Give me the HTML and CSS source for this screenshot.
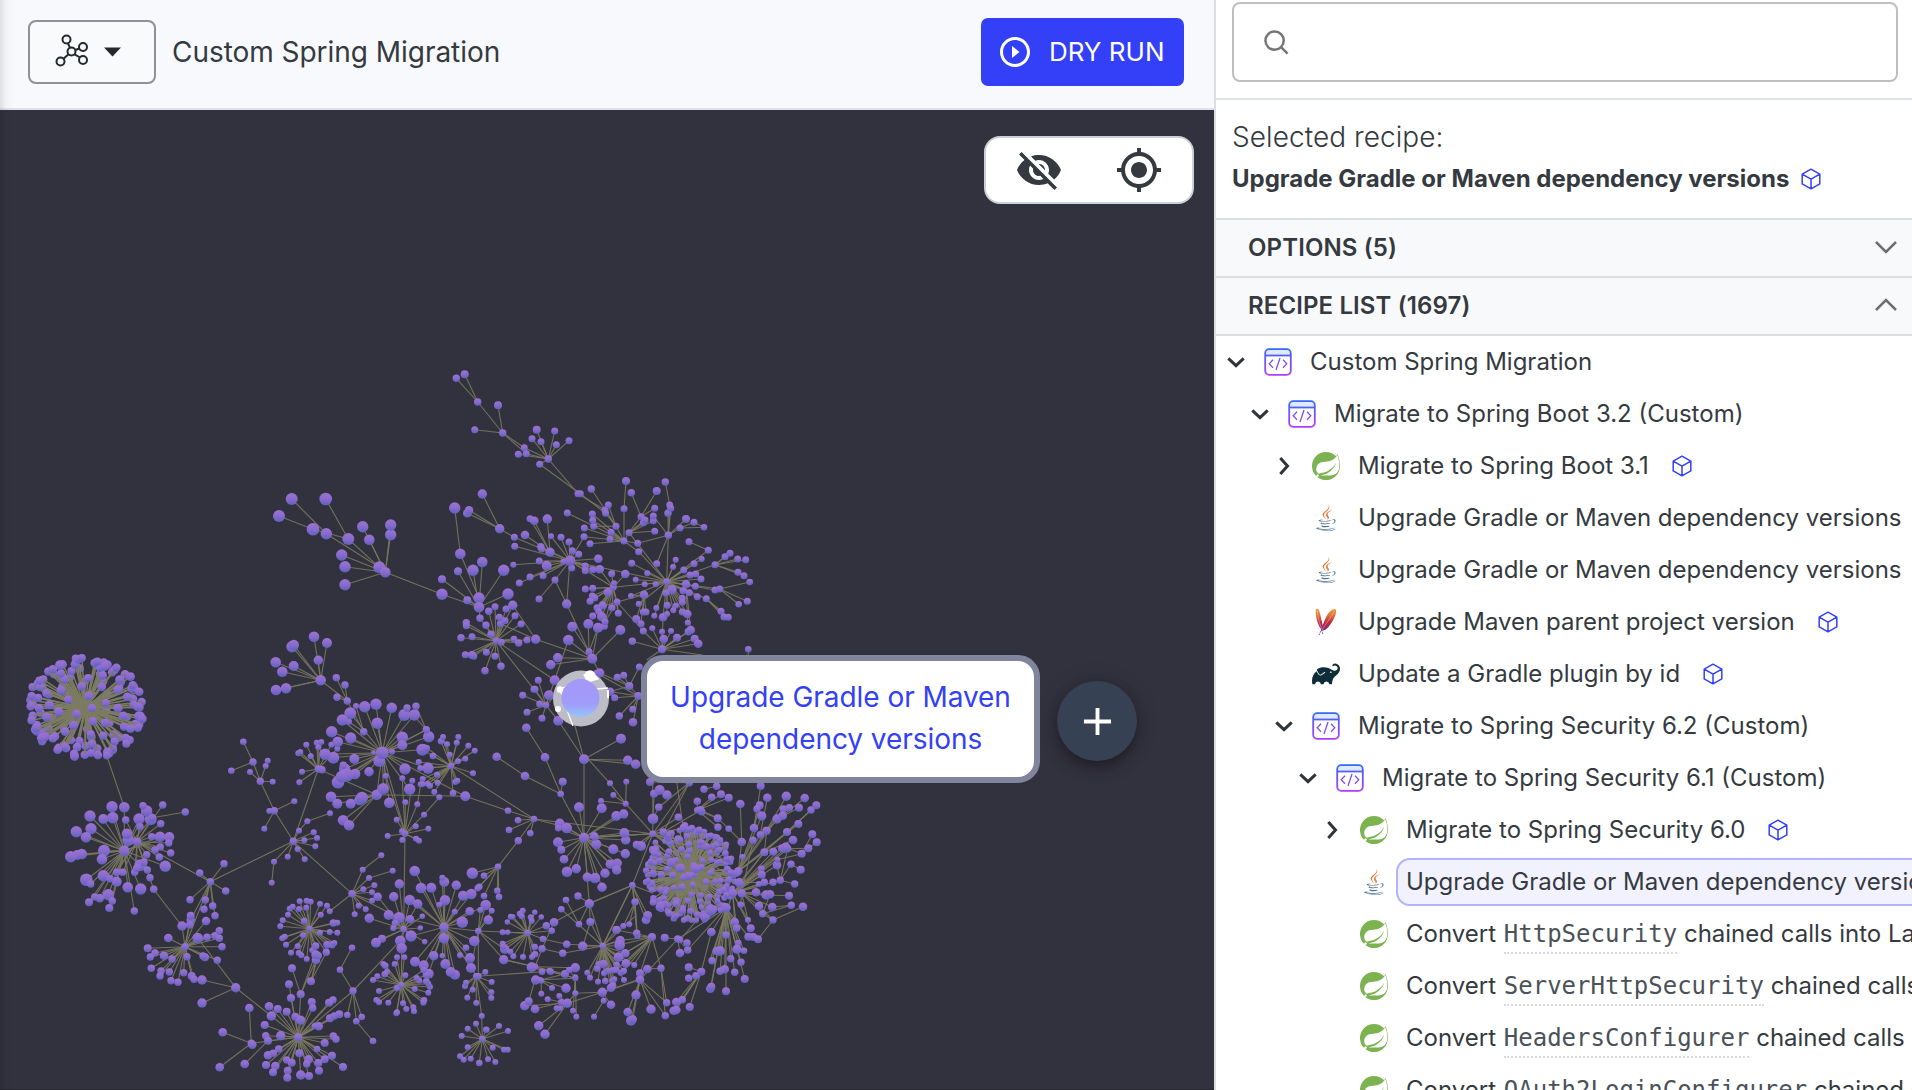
FILE: index.html
```html
<!DOCTYPE html>
<html lang="en">
<head>
<meta charset="utf-8">
<title>Custom Spring Migration</title>
<link rel="stylesheet" href="styles.css">
</head>
<body>
<svg class="defs" aria-hidden="true">
  <defs>
    <linearGradient id="code-stroke" gradientUnits="userSpaceOnUse" x1="0" y1="0" x2="0" y2="28"><stop offset="0" stop-color="#2f6bf5"/><stop offset="1" stop-color="#b63bfa"/></linearGradient>
    <linearGradient id="feather" x1="0" y1="0" x2="0" y2="1"><stop offset="0" stop-color="#f0a13a"/><stop offset=".3" stop-color="#e0713a"/><stop offset=".65" stop-color="#c1263f"/><stop offset="1" stop-color="#7a2a85"/></linearGradient>
    <linearGradient id="node-fill" x1="0" y1="0" x2="0" y2="1"><stop offset="0" stop-color="#9a74d2"/><stop offset=".5" stop-color="#8a6bcd"/><stop offset="1" stop-color="#5c62bf"/></linearGradient>
    <linearGradient id="selected-fill" x1="0" y1="0" x2="0" y2="1"><stop offset="0" stop-color="#a298f8"/><stop offset=".65" stop-color="#a29bf9"/><stop offset="1" stop-color="#93c6fb"/></linearGradient>
  </defs>
  <symbol id="i-down" viewBox="0 0 20 20"><path d="M2.300 6.300l7.700 7.400 7.700-7.400" fill="none" stroke="#2f353a" stroke-width="3"/></symbol>
  <symbol id="i-right" viewBox="0 0 20 20"><path d="M6.300 2l7.200 8-7.200 8" fill="none" stroke="#2f353a" stroke-width="3"/></symbol>
  <symbol id="i-code" viewBox="0 0 28 28"><g fill="none" stroke="url(#code-stroke)"><path d="M2 7h24V5a3.500 3.500 0 0 0-3.500-3.500h-17A3.500 3.500 0 0 0 2 5z" fill="#dfe9ff" stroke="none"/><rect x="1.200" y="1.200" width="25.600" height="25.600" rx="4" stroke-width="1.800"/><path d="M1.500 7.500h25" stroke-width="1.800"/><path d="M9 11.800l-3.800 4L9 19.800M19 11.800l3.800 4-3.800 4M16 10l-4 12" stroke-width="1.300"/></g></symbol>
  <symbol id="i-cube" viewBox="0 0 22 22"><path d="M11 1.200l8.800 4.900v9.800L11 20.800l-8.800-4.900V6.100zM2.200 6.100L11 11.200l8.800-5.100M11 11.200v9.600" fill="none" stroke="#3340f7" stroke-width="1.500" stroke-linejoin="round"/></symbol>
  <symbol id="i-spring" viewBox="0 0 24 24"><path fill="#7cb350" d="M21.854 1.416a10.450 10.450 0 0 1-1.284 2.247A11.967 11.967 0 1 0 3.852 20.776l.444.395a11.954 11.954 0 0 0 19.632-8.297c.346-3.013-.568-6.865-2.074-11.458zM5.580 20.875a1.017 1.017 0 1 1-.148-1.432 1.040 1.040 0 0 1 .148 1.432zm16.200-3.581c-2.939 3.926-9.260 2.593-13.285 2.790 0 0-.716.050-1.433.149 0 0 .272-.124.618-.247 2.840-.988 4.173-1.186 5.901-2.075 3.235-1.654 6.470-5.284 7.112-9.037-1.234 3.605-4.988 6.716-8.396 7.976-2.346.864-6.568 1.704-6.568 1.704l-.173-.099c-2.865-1.408-2.963-7.630 2.272-9.631 2.296-.889 4.469-.395 6.963-.987 2.643-.618 5.705-2.593 6.939-5.186 1.383 4.173 3.062 10.643.050 14.643z"/></symbol>
  <symbol id="i-java" viewBox="0 0 24 24"><path fill="#4c7192" d="M8.851 18.560s-.917.534.653.714c1.902.218 2.874.187 4.969-.211 0 0 .552.346 1.321.646-4.699 2.013-10.633-.118-6.943-1.149M8.276 15.933s-1.028.761.542.924c2.032.209 3.636.227 6.413-.308 0 0 .384.389.987.602-5.679 1.661-12.007.130-7.942-1.218M19.330 20.504s.679.559-.747.991c-2.712.822-11.288 1.069-13.669.033-.856-.373.750-.890 1.254-.998.527-.114.828-.093.828-.093-.953-.671-6.156 1.317-2.643 1.887 9.580 1.553 17.462-.700 14.977-1.820M9.292 13.210s-4.362 1.036-1.544 1.412c1.189.159 3.561.123 5.770-.062 1.806-.152 3.618-.477 3.618-.477s-.637.272-1.098.587c-4.429 1.165-12.986.623-10.522-.568 2.082-1.006 3.776-.892 3.776-.892M17.116 17.584c4.503-2.340 2.421-4.589.968-4.285-.355.074-.515.138-.515.138s.132-.207.385-.297c2.875-1.011 5.086 2.981-.928 4.562 0-.001.070-.062.090-.118M9.734 23.924c4.322.277 10.959-.153 11.116-2.198 0 0-.302.775-3.572 1.391-3.688.694-8.239.613-10.937.168 0-.001.553.457 3.393.639"/><path fill="#e07a35" d="M13.116 11.475c1.158 1.333-.304 2.533-.304 2.533s2.939-1.518 1.589-3.418c-1.261-1.772-2.228-2.652 3.007-5.688 0-.001-8.216 2.051-4.292 6.573M14.401 0s2.494 2.494-2.365 6.330c-3.896 3.077-.888 4.832-.001 6.836-2.274-2.053-3.943-3.858-2.824-5.539 1.644-2.469 6.197-3.665 5.190-7.627"/></symbol>
  <symbol id="i-maven" viewBox="0 0 28 28"><path fill="url(#feather)" d="M4.300.8C6.500.3 7.300 2.400 8 5.200l2.700 12 2-5C14.500 7.500 17 3.500 20.500 1.500c2-1 3.900-.6 3.700 1.700-.2 4-3.700 11-8.200 16.400-2 2.200-4.500 3.400-6 3C7.200 19 4.600 13 4 7.500c-.2-2.700-.6-5.800.3-6.700z"/><path d="M5.200 2c.5 7 2.200 13.500 4.800 19.500M22.500 3C19 9 14 16 9.500 22.500" fill="none" stroke="#fff" stroke-opacity=".5" stroke-width=".7"/><path d="M9.800 21l-3 6.500M9.500 22l1.500 4.500" fill="none" stroke="#6b3f86" stroke-width="1" stroke-dasharray="1.500 1"/></symbol>
  <symbol id="i-gradle" viewBox="0 0 24 24"><path fill="#0f2d38" d="M22.695 4.297a3.807 3.807 0 0 0-5.290-.090.368.368 0 0 0 0 .533l.460.470a.363.363 0 0 0 .474.032 2.182 2.182 0 0 1 2.860 3.291c-3.023 3.020-7.056-5.447-16.211-1.083a1.240 1.240 0 0 0-.534 1.745l1.571 2.713a1.238 1.238 0 0 0 1.681.461l.037-.020-.029.020.688-.384a16.083 16.083 0 0 0 2.193-1.635.384.384 0 0 1 .499-.016.357.357 0 0 1 .016.534 16.435 16.435 0 0 1-2.316 1.741H8.770l-.696.390a1.958 1.958 0 0 1-.963.250 1.987 1.987 0 0 1-1.726-.989L3.900 9.696C1.060 11.720-.686 15.603.260 20.522a.363.363 0 0 0 .354.296h1.675a.363.363 0 0 0 .370-.331 2.478 2.478 0 0 1 4.915 0 .360.360 0 0 0 .357.317h1.638a.363.363 0 0 0 .357-.317 2.478 2.478 0 0 1 4.914 0 .363.363 0 0 0 .358.317h1.627a.363.363 0 0 0 .363-.357c.037-2.294.656-4.930 2.420-6.250 6.108-4.570 4.502-8.486 3.088-9.900zm-6.229 6.901l-1.165-.584a.730.730 0 1 1 1.165.587z"/></symbol>
</svg>

<div class="app">
  <main class="workspace">
    <header class="topbar">
      <button class="mode" aria-label="View mode">
        <svg class="mode-icon" viewBox="0 0 34 38" fill="none" stroke="#24292e" stroke-width="2"><circle cx="17.500" cy="18.500" r="4"/><circle cx="12.500" cy="6.500" r="4"/><circle cx="29" cy="14" r="4"/><circle cx="29" cy="27" r="4"/><circle cx="6.500" cy="28.500" r="4"/><path d="M16 14.800l-2-4.500M21.300 17l4-1.500M20.600 21.300l5.400 3.200M14.500 21.300l-5 4.500"/></svg>
        <svg class="mode-caret" viewBox="0 0 17 10"><path d="M0 .5h17L8.500 9.500z" fill="#24292e"/></svg>
      </button>
      <h1 class="title">Custom Spring Migration</h1>
      <button class="run">
        <svg class="run-icon" viewBox="2 2 20 20"><path fill="#fff" d="M10 16l5-4-5-4v8zM12 2C6.480 2 2 6.480 2 12s4.480 10 10 10 10-4.480 10-10S17.520 2 12 2zm0 18c-4.410 0-8-3.590-8-8s3.590-8 8-8 8 3.590 8 8-3.590 8-8 8z"/></svg>
        <span>DRY RUN</span>
      </button>
    </header>
    <section class="canvas">
      <svg class="graph" id="graph" viewBox="0 110 1214 980"></svg>
      <div class="tools">
        <svg viewBox="0 0 24 24"><path d="M12 7c2.760 0 5 2.240 5 5 0 .650-.130 1.260-.360 1.830l2.920 2.920c1.510-1.260 2.700-2.890 3.430-4.750-1.730-4.390-6-7.500-11-7.500-1.400 0-2.740.250-3.980.700l2.160 2.160C10.740 7.130 11.350 7 12 7zM2 4.270l2.280 2.280.460.460C3.080 8.300 1.780 10.020 1 12c1.730 4.390 6 7.500 11 7.500 1.550 0 3.030-.300 4.380-.840l.420.420L19.730 22 21 20.730 3.270 3 2 4.270zM7.530 9.800l1.550 1.550c-.050.210-.080.430-.080.650 0 1.660 1.340 3 3 3 .220 0 .440-.030.650-.080l1.550 1.550c-.670.330-1.410.530-2.200.530-2.760 0-5-2.240-5-5 0-.790.200-1.530.530-2.200zm4.310-.780l3.150 3.150.020-.160c0-1.660-1.340-3-3-3l-.170.010z"/></svg>
        <svg viewBox="0 0 24 24"><path d="M12 8c-2.210 0-4 1.790-4 4s1.790 4 4 4 4-1.790 4-4-1.790-4-4-4zm8.940 3c-.460-4.170-3.770-7.480-7.940-7.940V1h-2v2.060C6.830 3.520 3.520 6.830 3.060 11H1v2h2.060c.460 4.170 3.770 7.480 7.940 7.940V23h2v-2.060c4.170-.460 7.480-3.770 7.940-7.940H23v-2h-2.060zM12 19c-3.870 0-7-3.130-7-7s3.130-7 7-7 7 3.130 7 7-3.130 7-7 7z"/></svg>
      </div>
      <div class="bubble">Upgrade Gradle or Maven<br>dependency versions</div>
      <button class="add" aria-label="Add"><svg viewBox="0 0 30 30"><path d="M15 1v28M1 15h28" stroke="#fff" stroke-width="4"/></svg></button>
    </section>
  </main>

  <aside class="panel">
    <div class="search-wrap"><div class="search"><svg viewBox="0 0 26 26" fill="none" stroke="#757575" stroke-width="2.600"><circle cx="11" cy="11" r="9.500"/><path d="M17.500 17.500l7 7"/></svg></div></div>
    <div class="selected">
      <p class="selected-label">Selected recipe:</p>
      <p class="selected-name"><span>Upgrade Gradle or Maven dependency versions</span><svg class="cube"><use href="#i-cube"/></svg></p>
    </div>
    <div class="section"><span>OPTIONS (5)</span><svg viewBox="0 0 24 14"><path d="M2 2l10 10L22 2" fill="none" stroke="#6e6e6e" stroke-width="2.500"/></svg></div>
    <div class="section"><span>RECIPE LIST (1697)</span><svg viewBox="0 0 24 14"><path d="M2 12L12 2l10 10" fill="none" stroke="#6e6e6e" stroke-width="2.500"/></svg></div>
    <ul class="tree">
      <li class="row l0"><svg class="chev"><use href="#i-down"/></svg><svg class="ico"><use href="#i-code"/></svg><span class="name">Custom Spring Migration</span></li>
      <li class="row l1"><svg class="chev"><use href="#i-down"/></svg><svg class="ico"><use href="#i-code"/></svg><span class="name">Migrate to Spring Boot 3.2 (Custom)</span></li>
      <li class="row l2"><svg class="chev"><use href="#i-right"/></svg><svg class="ico"><use href="#i-spring"/></svg><span class="name">Migrate to Spring Boot 3.1</span><svg class="cube"><use href="#i-cube"/></svg></li>
      <li class="row l2"><span class="chev"></span><svg class="ico java"><use href="#i-java"/></svg><span class="name">Upgrade Gradle or Maven dependency versions</span></li>
      <li class="row l2"><span class="chev"></span><svg class="ico java"><use href="#i-java"/></svg><span class="name">Upgrade Gradle or Maven dependency versions</span></li>
      <li class="row l2"><span class="chev"></span><svg class="ico"><use href="#i-maven"/></svg><span class="name">Upgrade Maven parent project version</span><svg class="cube"><use href="#i-cube"/></svg></li>
      <li class="row l2"><span class="chev"></span><svg class="ico"><use href="#i-gradle"/></svg><span class="name">Update a Gradle plugin by id</span><svg class="cube"><use href="#i-cube"/></svg></li>
      <li class="row l2"><svg class="chev"><use href="#i-down"/></svg><svg class="ico"><use href="#i-code"/></svg><span class="name">Migrate to Spring Security 6.2 (Custom)</span></li>
      <li class="row l3"><svg class="chev"><use href="#i-down"/></svg><svg class="ico"><use href="#i-code"/></svg><span class="name">Migrate to Spring Security 6.1 (Custom)</span></li>
      <li class="row l4"><svg class="chev"><use href="#i-right"/></svg><svg class="ico"><use href="#i-spring"/></svg><span class="name">Migrate to Spring Security 6.0</span><svg class="cube"><use href="#i-cube"/></svg></li>
      <li class="row l4"><span class="chev"></span><svg class="ico java"><use href="#i-java"/></svg><span class="name active">Upgrade Gradle or Maven dependency versions</span></li>
      <li class="row l4"><span class="chev"></span><svg class="ico"><use href="#i-spring"/></svg><span class="name">Convert <code>HttpSecurity</code> chained calls into Lambda</span></li>
      <li class="row l4"><span class="chev"></span><svg class="ico"><use href="#i-spring"/></svg><span class="name">Convert <code>ServerHttpSecurity</code> chained calls</span></li>
      <li class="row l4"><span class="chev"></span><svg class="ico"><use href="#i-spring"/></svg><span class="name">Convert <code>HeadersConfigurer</code> chained calls into</span></li>
      <li class="row l4"><span class="chev"></span><svg class="ico"><use href="#i-spring"/></svg><span class="name">Convert <code>OAuth2LoginConfigurer</code> chained calls</span></li>
    </ul>
  </aside>
</div>
<script src="graph.js"></script>
</body>
</html>
```

FILE: styles.css
```css
* { box-sizing: border-box; }
body { margin: 0; font-family: Inter, "Liberation Sans", sans-serif; color: #343a40; }
p, h1, ul { margin: 0; padding: 0; }
button { font: inherit; padding: 0; border: 0; }
.defs { position: absolute; width: 0; height: 0; }

.app { display: grid; grid-template-columns: 1214px 1fr; width: 1912px; height: 1090px; overflow: hidden; background: #fff; }
.workspace { display: grid; grid-template-rows: 110px 980px; position: relative; min-width: 0; }
.workspace::before { content: ""; position: absolute; z-index: 3; inset: 0 auto 0 0; width: 14px; background: linear-gradient(90deg, rgba(0,0,0,.1), rgba(0,0,0,.025) 45%, rgba(0,0,0,0)); pointer-events: none; }

.topbar { display: flex; align-items: center; padding: 0 30px 4px 28px; background: #f8f9fc; border-bottom: 2px solid #dee2e8; }
.mode { display: flex; align-items: center; gap: 16px; width: 128px; height: 64px; padding-left: 24px; background: #f9fafc; border: 2px solid #8f9194; border-radius: 8px; }
.mode-icon { width: 34px; height: 38px; }
.mode-caret { width: 17px; height: 10px; }
.title { flex: 1; padding-left: 16px; font-size: 28px; line-height: 40px; font-weight: 400; letter-spacing: -.04px; white-space: nowrap; }
.run { display: flex; align-items: center; gap: 19px; width: 203px; height: 68px; padding-left: 19px; color: #fff; background: #3340f7; border-radius: 7px; font-size: 26px; line-height: 40px; white-space: nowrap; }
.run-icon { width: 30px; height: 30px; }

.canvas { position: relative; background: #32313e; border-bottom: 1px solid #292934; }
.graph { display: block; width: 1214px; height: 980px; }
.tools { position: absolute; top: 26px; left: 984px; display: flex; align-items: center; justify-content: space-between; width: 210px; height: 68px; padding: 0 29px; background: #fff; border: 2px solid #cdd1d7; border-radius: 16px; }
.tools svg { width: 48px; height: 48px; fill: #343a3f; }
.bubble { position: absolute; left: 641px; top: 545px; width: 399px; height: 128px; padding-top: 15px; background: #fff; border: 6px solid #80859d; border-radius: 22px; color: #3340f7; font-size: 28px; line-height: 42px; letter-spacing: -.05px; text-align: center; white-space: nowrap; }
.add { position: absolute; left: 1057px; top: 571px; display: grid; place-items: center; width: 80px; height: 80px; border-radius: 50%; background: #364153; box-shadow: 0 6px 14px rgba(0,0,0,.3), 0 2px 24px rgba(0,0,0,.15); }
.add svg { width: 29px; height: 29px; }

.panel { min-width: 0; overflow: hidden; border-left: 2px solid #dedede; background: #fff; }
.search-wrap { height: 100px; padding: 2px 14px 0 16px; border-bottom: 2px solid #dee2e6; }
.search { display: flex; align-items: center; height: 80px; padding-left: 30px; border: 2px solid #bfbfbf; border-radius: 8px; }
.search svg { width: 25px; height: 25px; }
.selected { height: 118px; padding: 17px 0 0 16px; }
.selected-label { font-size: 28px; line-height: 40px; font-weight: 300; letter-spacing: .07px; }
.selected-name { display: flex; align-items: center; gap: 11px; height: 43px; font-size: 24px; font-weight: 700; white-space: nowrap; }
.cube { width: 22px; height: 22px; flex: none; }
.section { display: flex; align-items: center; justify-content: space-between; height: 58px; padding: 0 14px 2px 32px; background: #f8f9fb; border-top: 2px solid #dedede; font-size: 24px; font-weight: 600; letter-spacing: .12px; }
.section svg { width: 24px; height: 14px; }

.tree { list-style: none; border-top: 2px solid #dedede; }
.row { display: flex; align-items: center; height: 52px; padding-left: 10px; white-space: nowrap; font-size: 24px; }
.l1 { padding-left: 34px; }
.l2 { padding-left: 58px; }
.l3 { padding-left: 82px; }
.l4 { padding-left: 106px; }
.chev { flex: none; width: 20px; height: 20px; }
.ico { flex: none; width: 28px; height: 28px; margin: 0 8px 0 18px; }
.java { padding: 1px; }
.name { height: 48px; padding: 0 8px; border: 2px solid transparent; line-height: 44px; }
.active { background: #f2f2ff; border-color: #b0b4fa; border-radius: 14px; }
.row .cube { margin-left: 12px; }
code { display: inline-block; height: 34px; margin-left: 1px; line-height: 28px; font-family: "DejaVu Sans Mono", monospace; font-size: 24px; color: #4b5158; border-bottom: 2px dotted #d9dbe0; }
```

FILE: graph.js
```js
const svg = document.getElementById('graph');
const lines = [], nodes = [];
const f = n => n.toFixed(1);
const line = (a, b, c, d, w) => `<path d="M${f(a)} ${f(b)}L${f(c)} ${f(d)}" stroke-width="${w || 1.1}"/>`;
const dot = (x, y, r) => `<circle cx="${f(x)}" cy="${f(y)}" r="${f(r)}"/>`;

/* Each row is "hub: leaf leaf ...", with points as x,y[,r] in thirds of a pixel from the group's origin. */
function group(ox, oy, base, text) {
  text.trim().split('\n').forEach(row => {
    const [h, rest] = row.split(':');
    const p = s => { const v = s.trim().split(',').map(Number); return [ox + v[0] / 3, oy + v[1] / 3, v[2] === 0 ? 0 : (v[2] || base) / 3]; };
    const hub = p(h);
    rest.trim().split(/\s+/).forEach(s => {
      const q = p(s);
      lines.push(line(hub[0], hub[1], q[0], q[1]));
      if (q[2]) nodes.push(q);
    });
    if (hub[2]) nodes.push(hub);
  });
}

group(250, 350, 10.5, `
683,156,11:619,85,11 644,73,12 758,249,11
758,249,11:744,166,12 674,239 823,293 829,311
895,327,11:860,239,12 914,243 846,266 873,275 919,284 957,272 823,293 805,313 829,311 869,343 984,431
869,343:991,431
1065,480:984,431 1098,529
1067,490:991,431 1098,529
1098,529,12:1024,417,11 1075,465 1031,529 1122,573
1122,573,11:1122,476 952,489 1027,492 1028,511 1003,534 1083,547 1080,567 1002,560 1020,581 1137,548 1163,580 1166,605
1122,476:1128,393,12
1137,548:1173,500 1180,518 1210,512 1214,544 1185,510 1250,695
1173,500:1144,428,11 1220,423,12 1214,475
1255,556,11:1259,465 1254,490,11 1262,475 1210,498 1290,534 1308,507,12 1163,580 1220,641 1250,695
1246,396,11:1259,465,11
1290,534:1332,517 1362,532,10
1332,517:1362,532
1250,695,10:1145,640 1192,670,9 1157,689,9 1184,703,9 1217,703,9 1277,629,9 1269,651,9 1301,660 1332,641 1355,627,9 1375,601 1395,644 1320,675 1337,672 1353,687 1336,709 1308,703,13 1299,722 1266,719,14 1318,728 1342,740 1369,746 1395,720 1409,717 1297,745 1297,757 1252,766 1277,767,9 1270,781,9 1297,786 1312,792,13 1239,802,13 1251,792,9 1219,774,9 1213,797,9 1143,738,9 1166,762,9 1247,729 1166,605 1090,712
1375,601:1317,575
1395,644:1425,620 1440,610 1463,627 1487,629 1464,667 1482,677
1409,717:1499,696,10 1466,763,10 1492,754
1369,746:1413,784 1422,801 1435,802
1182,734,13:1188,786 1180,786 1159,807,12 1173,821 1143,738 1101,756
1090,712:1085,671 1049,658,13 1126,672,13 1092,700,9 1073,727,13 1028,715 1006,717 1027,738 1034,744 1020,754 1057,764 1041,773 1060,768 1028,798 1047,785 1086,773 1105,790 1101,756 1055,800,14 1063,829
1101,756:1180,843 1065,815 1060,768 1105,790
960,632,16:903,559,9 933,562 957,576 967,602 986,613 940,635,9 1045,626,13 1006,648 1006,662 1028,659 1049,658 965,654 868,633 790,644,9 840,681 879,677 808,699 915,690 890,647,15 900,607,14 872,590,11 794,589 950,762,14 1002,560 1090,712 1250,695
915,690:867,747 950,762
900,607:840,506 853,512,13 892,507,14 825,555,13 875,597 793,562
749,536,14:697,432,14 652,490,13 657,481,13 793,562
950,762:1017,905
1017,905,16:967,830,15 1015,822,15 1044,833,15
1027,926,15:857,868,14 955,870,16 923,923,14 902,944,14 1111,840,15 1049,969,14 1044,833
857,868:788,766,14 751,821
914,991,15:955,870 738,872,0
852,1018:738,872,0
738,872,10:735,770 768,777 795,797 813,822 788,766 716,784,11 690,805,11 751,821,14 748,802 765,812 708,826,11 649,818,11 649,827 723,853,11 666,860 633,863,11 792,867,10 831,870 806,879,11 754,877 709,907 735,919 671,919 666,915,12 646,914 705,962,11 753,949,11
687,772,16:576,688,12 624,664,12 652,751,12 576,733,17 669,661,17 697,636,16 761,661,17 774,732,17 687,744,17 690,805
631,611,16:614,474,17 687,744
406,667,16:576,733,0 285,704,17 285,650,17 275,615,17 388,652,18 422,554,17 422,525,17 358,569,16 338,530,17
388,652,18:229,551,17 295,567,18
295,567,18:227,447,19 189,538,19
229,551,17:125,447,18
189,538,19:87,498,18
1236,898,12:1147,874,11 1180,843 1207,835,9 1236,845,9 1263,843,9 1241,867,13 1281,863,12 1315,845,11 1322,840,13 1334,866,12 1345,881,13 1239,802 1357,915,0 1190,930,0
1312,792,13:1308,703 1313,818,9
1308,703:1322,840
1138,1008,12:1102,982 1121,976 1049,969 1168,951 1080,1025,13
1495,915,0:1495,898,10
888,1066,10:865,991 852,1018 897,1036,15 818,1036 855,1018 869,1062 831,1087 876,1105 925,1112,15 940,1010
914,991:888,1066,0
925,1112,0:1002,1228,0 960,1090
1165,1038,12:1082,1025 1094,1043 1108,1098,11 1138,1008 1148,1078 1149,1117,13 1040,970
`);

group(0, 620, 11, `
320,407:373,562,16
373,692,16:336,560,17 373,562,17 270,588,17 310,597,15 338,593,17 273,626,17 229,635,17 258,652,16 312,692,18 306,718,16 245,702,16 232,705,15 212,710,17 259,779,19 272,792 310,767,17 350,785,15 383,802,16 325,824,17 422,807,17 421,736,18 496,739,17 385,660,18 381,641,16 452,598,18 440,573,17 417,597,17 480,650,16 508,651,15 299,835,13 284,831 267,847,12 337,843 328,864,12 403,873
411,665,13:429,557 488,555 457,593 377,600 420,620 482,611 455,650 506,669 481,681 512,699 440,704 465,690 478,712 432,727 442,750 404,757 450,773 410,745 368,757 350,757 330,776 461,808 631,785
457,593:556,576
461,808:546,918,14
631,785,12:599,759 672,731 677,813 570,839 616,840 612,868 638,858 645,887 880,664 572,900,13 555,980
555,980,11:546,918 572,887,12 569,915 618,903,13 593,954,16 621,952 645,947 658,932 658,955 666,980 505,954,13 443,985,12 465,999 451,1011 492,1007,13 516,1017 454,1045 483,1053 480,1068 508,1056 513,1082 534,1087 561,1010 551,1058 575,1068,12 582,1078 615,1012,12 652,1021 609,1008
707,1103,14:593,954 606,1080,14 606,1149,14 814,1188,14
880,664,10:897,632,9 941,637,9 913,661,9 951,654,9 946,679,9 893,688,9 914,718,9 863,710,9 822,725,9 823,572 955,447 1056,821
922,604,9:897,632,9 990,580,9
822,725,9:815,788,9
823,572,10:808,573,9 883,544,9 793,626,9 781,484
781,484,10:750,456,9 818,485,9 797,438,9 759,426
803,422,9:797,438,9
759,426,9:730,365,10 694,452,10
955,447,10:919,374,9 950,368,9 964,366,9 895,400,9 901,396,9 932,409,9 906,455,9 898,487,9 966,449 955,382,9 994,374,9 1012,386,9 1130,524,0
962,181,16:876,80,17 881,75,16 942,50,16 981,69,15 955,121,14 881,138,15 847,155,16 827,127,16 828,210,16 858,205,16 1042,243
1042,243:1009,173 1035,195 1011,232 1091,335
1091,335:1046,305,10 1068,258,9
1130,524,16:993,530,16 1012,551,15 1052,551,15 1079,540,16 1086,533,18 1029,601,16 1047,616,16 1396,529,15
1147,398,19:1051,280,18 1027,300,17 1094,260,17 1128,253,17 1175,263,16 1213,285,18 1243,285,17 1132,310,17 995,335,17 1013,365,16 1052,354,17 1207,352,17 1207,376,15 1000,413,18 975,403,17 1063,417,15 1215,447,17 1229,508,17 1168,548,16 1150,506,17 1107,455,14 1065,462,16 1034,447,17 1040,465,20 1014,487,19 1138,423,18 1120,398,7 1176,395,9 1286,350,17 1267,389,18 1284,445,17 1130,524 1279,329 1157,468,9 1216,640,0
1279,329:1221,264 1248,259
1014,487,19:1025,470,18 1030,436
1267,389,18:1273,388,15
1056,821,9:1088,749,9 1107,774,9 1123,796,9 1090,808,9 1116,817,9 1116,842,9 1076,857,9 1097,868,9 1064,883,9 989,874,9 1210,900,0
1088,749,9:1144,706,9
1107,774,9:1178,752,9
929,926,9:899,844,9 920,842,9 932,845,9 960,852,9 981,857,9 869,866,9 878,860,9 897,867,9 919,863,9 864,884,9 848,901,9 841,919,9 913,903,10 962,884,9 1000,909 1012,908,9 989,936,9 1012,938,9 960,938,9 909,946,9 854,950,9 847,955,9 858,974,9 893,979,9 873,998,9 896,999,9 904,1006,9 920,1017,9 937,991,9 947,978 948,1002 981,974 996,974 1003,969,9 979,997
933,1084,12:948,1020,13 979,997 955,1007
902,1123,12:876,1045,12 948,1020 945,1005
895,1252,12:902,1123 867,1093,12 873,1134,12 860,1175,12 833,1167,12 807,1159,13 814,1188,14 886,1190,12 902,1201,14 935,1146,12 938,1164 794,1215,12 797,1247 842,1247,14 804,1262,12 836,1287,11 804,1306,13 820,1300 798,1335,12 826,1338,13 819,1357,12 860,1320 875,1328,12 863,1352,12 862,1373,12 898,1300,12 902,1365,14 926,1318,13 920,1332 927,1368,12 951,1287,10 974,1269,12 1000,1248 1008,1258 996,1307,12 974,1318,12 955,1329,12 957,1352,12 1029,1341,12 956,1219,13 945,1218,10 990,1195,12 1003,1188,11 1018,1183,12 999,1140 987,1148,12 754,1270 1059,1113
754,1270,14:748,1164,13 668,1237,13 659,1342,13 757,1274,13
804,1262:734,1332,13
1059,1113,10:1020,1049,10 1042,1185,10 1069,1204,10 1085,1191,10 1201,962,0
1020,1049,10:1056,983,10
1069,1204,10:1119,1263,10
`);

group(280, 680, 10, `
513,258,10:483,184 489,171,9 535,171,9 501,193,9 530,188,9 565,197,9 584,212,9 556,236,9 534,244,9 509,224,9 459,228 416,246,9 441,204,9 421,265,9 428,297,9 471,284,9 427,313,9 443,312,9 450,318,9 473,309,9 463,336,9 526,306,9 532,302,9 579,280,9 519,340 762,417,0 444,265,0 427,209,0
307,218,0:439,149 556,349
375,461,10:367,295,9 397,302,9 376,367,9 412,373,9 350,419,9 323,468,9 366,454,9 367,480,9 407,439,9 445,446,9 408,476,9 417,482,9 371,748 432,404,9 317,288,9
412,373,9:422,313,9
432,404,9:478,352,9
762,417,10:684,392 714,421 687,450 751,460 715,482,11 835,436 1118,461,0
556,349,15:684,392
654,560,10:715,482 612,587 598,620 577,580,17 593,625 652,632 657,651 612,648
912,473,15:842,342 839,430,14 835,445 860,444,16 834,487,15 844,509,12 852,538,13 861,575,16 889,566,14 922,592,14 945,594,16 975,580,14 966,622,14 991,553,14 1012,550,14 1010,570,14 1036,521,14 1000,508,15 1037,480,14 1033,459,15 1009,408,15 1031,402,14 965,385,15 897,382,15 949,493,15 942,468,12 1118,461,0
842,342,13:848,305,12 735,288,13 795,232,13
735,288,13:650,230,13
795,232,13:739,143,13
912,238,15:912,473 1023,176,15 1043,241,14 1067,253,14 875,100,0
1037,371,9:990,310,9 1000,345,9 963,363,9 1039,305,9 1118,461,0
990,310,9:925,238,0
371,748,10:390,718,13 357,713,17 345,730 326,705,15 268,715,14 293,650,13 341,650,14 358,612,14 389,660,16 413,672,14 427,709,8 421,744,8 361,782,16 393,768,17 365,805,16 306,776,12 288,788,15 340,745,9 434,785,8
492,742,14:493,606,15 487,593,9 454,623,15 423,624,16 404,573,16 529,616,14 495,661,16 478,674,9 524,695,9 547,727,17 569,694,13 549,647,15 574,642,16 617,675,16 595,753 583,783,16 570,834,15 573,864,15 558,803,10 540,826,9 525,884,15 512,876,15 496,852,15 492,775,16 461,827,14 487,827,8 446,881,15 431,856,15 405,845,15 393,768 389,660 413,672 390,718 590,889
595,753,14:743,759 601,690,9 625,720,14 635,692,9 617,675 674,808,14 671,839,14 595,889 573,864
364,915,9:351,832,9 373,832,9 344,852,9 310,852,9 316,857 292,889,9 279,900,9 321,875,9 314,883 376,886,9 297,933,9 289,960,9 297,967,9 325,968,9 351,924 369,970,9 379,987,9 400,982,9 402,994,9 351,997,9 349,1000,9 432,961 430,968,9 445,938,9 450,921,9 445,911,9 439,904 418,902,9 410,894,9 438,885 404,927,9 365,805 431,870
589,889,10:616,876,9 635,906,9 555,919,9 634,937,9 634,954,9 578,929,9 562,953,9 589,969,9 605,1008,9 558,908,9 786,875
605,1008,9:607,1077
607,1077,9:588,1031,9 563,1046,9 619,1049,10 657,1038,9 684,1053,9 545,1068,9 563,1102,9 638,1103,9 672,1109,9 683,1109,9 540,1129,9 551,1139,9 572,1136,9 598,1149,10 624,1138,9 646,1146,9
743,759,15:728,692,9 764,697,8 719,701,9 692,710,9 698,710,8 725,709,9 752,712,9 784,711,8 682,726,8 799,737,11 755,723,9 668,757,9 683,757,8 815,752,10 789,777,10 764,801 765,823 756,831,9 729,831,9 700,829,9 691,815,9 668,791,9 669,800,9
789,777:860,793,11
786,806,11:848,820,11 822,727,13 765,860
822,727:928,670
674,808:743,759
671,839:765,860
928,670,14:894,648,11 897,733 931,726,12 912,473 1057,616 968,798
897,733:858,660
968,798,16:844,688 908,799,14 860,793 848,820 931,726 957,853 952,866 970,852,13 922,878,9 930,893,9 954,905,9 972,880,9 976,903 983,873 999,871 1010,855 998,902 999,916 993,923,13 1003,898,9 1016,832,14 1036,820,13 1018,797,14 1020,783,14 1010,749,12 1038,850,13 1063,855,9 1032,872,9 1032,900,9 1022,879,9
908,799:931,726
765,860,14:886,863,14 755,862,15 812,875 855,882,12 786,875,9 672,839
886,895,9:767,900,14 868,870 812,875,9 886,940,9 809,873
862,970,14:734,977,14 776,1037,14 795,1063,14 803,958,9 838,948,9 830,985,9 840,985,9 844,967 886,940,9 967,937,14
765,987,13:844,967
746,964,12:765,900
780,900,9:858,925,14 816,924,9 855,882
784,902,9:784,941,9
886,892,9:889,1010,9 879,992,9
967,937,14:993,974,13 971,962,9 886,940 1078,898
971,962,9:942,1010,9
`);

group(520, 760, 11, `
398,221,10:399,176,16 430,217,12 475,172 490,205 363,258,15 350,254,12 192,235 337,376 225,230 560,260 600,290,0 630,375,0 620,300,0 648,355,0 640,400,0 508,68
399,176,16:402,101,12 416,142 398,60,0
419,90,15:441,105,14
508,68,13:416,142 430,217 390,66,12
337,376,13:345,426 208,431,14 352,528,9 378,480,13 383,466,13 248,556,0 400,400,0
345,426,9:352,528,9 310,498,9 328,493,9 350,520
250,556,0:337,376 301,541,13 344,470,0
396,531,12:289,510,12 299,555,16 301,541 295,592,14 315,580,10 317,612 341,616 310,634,10 352,528 423,625 289,630,10 360,640,12
423,625,13:382,627,13 440,728 436,767
360,659,13:348,705,14 393,748,14 323,756,13 333,782,15 338,778,13 436,767,14 440,728,13 473,537 247,698
544,635,12:506,655 528,647 509,741,12 487,719 469,726,13 469,750,13 461,752,13 574,516,13 506,622,12
574,516,13:620,443
473,537,13:480,579,13 503,570,11 501,549 434,533,12 620,443
480,540,10:540,470,0
665,400,13:757,441,13 717,438,13 728,461 684,480,9 662,434,10 699,241
638,400,13:733,277,12 760,275,12 785,265 793,268 803,266 724,326,10 725,344,12 771,316,13 772,299,9 716,372,9 733,367 759,367 708,397,13 738,405,14 750,403,13 665,400 684,480 644,486,13 650,505 692,505,12 781,361 570,600,0
618,443,14:618,525 655,549,10 651,568,14 672,572,10 663,607 644,637,11 674,657,12 632,596 600,573,15 590,573,13 576,602 614,628,13 600,634 618,694,12 571,686,13 574,680,12 685,530,12 503,570 644,486 573,450,17
685,530,12:700,531,12 714,538,12
781,361,12:803,266 813,313 824,372 771,316
813,313:842,329,12
728,461,13:814,436 750,403 759,480
814,436,11:757,441
759,480,12:849,440,13 714,538 717,438
807,407,12:738,405
733,277,12:801,216,12 740,212,12 819,240,13
845,281,12:877,223,12 772,299 797,262,14
865,265,12:890,247,12 803,266
655,334,13:699,241 667,291,9 702,204,13 739,212,12 725,168,14 721,224 771,177,14 801,216 835,192,12 733,277
702,204,13:719,136,12 711,147 722,78,12
721,224,11:742,113,13
725,168:711,147
739,212,12:799,109,14 790,147,11 788,167,13
771,177,14:837,143,12 808,143,11
801,216,12:873,150 889,136,12
788,167,13:854,114,13
665,246,13:661,132,13 626,206,10 655,334
532,151,10:575,112,11 545,155 603,103,12 532,124,11 626,113,12 593,175,12 594,202
594,175,13:626,206 541,150
552,88:590,79
490,205:470,66,0 430,217
430,217:542,150 650,340
658,368,14:600,340,0 733,367 733,277
`);

/* Spherical clusters: back half, then the spokes, then the front half. */
let seed = 7;
const rnd = () => (seed = (seed * 16807) % 2147483647) / 2147483647;
function ball(cx, cy, rx, ry, n, lo, hi, jitter, w) {
  let back = '', spokes = '', front = '';
  for (let i = 0; i < n; i++) {
    const z = 1 - 2 * (i + .5) / n, a = i * 2.39996 + rnd() * .4, k = Math.sqrt(1 - z * z) * (1 - jitter * rnd());
    const x = cx + rx * k * Math.cos(a), y = cy + ry * k * Math.sin(a), r = lo + (hi - lo) * rnd();
    spokes += line(cx, cy, x, y, w);
    if (z > 0) front += dot(x, y, r); else back += dot(x, y, r);
  }
  return `<g fill="url(#node-fill)">${back}</g><g stroke="#7c7c62">${spokes}</g><g fill="url(#node-fill)">${front}</g>`;
}

const drawn = new Set();
const dots = nodes.filter(q => { const k = Math.round(q[0]) + '.' + Math.round(q[1]); return !drawn.has(k) && drawn.add(k); })
  .map(q => dot(q[0], q[1], q[2])).join('');

svg.innerHTML =
  `<g stroke="#7a795f" stroke-opacity=".9">${lines.join('')}</g>` +
  ball(85.500, 708, 58.500, 50.500, 150, 4, 4.500, .05, 1.5) +
  ball(690, 874, 46, 49, 220, 2.8, 3.5, .12, 1.3) +
  `<g fill="url(#node-fill)">${dots}${dot(680.5, 868, 4.5)}${dot(695.500, 868.500, 4.7)}${dot(688.500, 876, 4.2)}${dot(671, 862.500, 4.5)}${dot(660, 907, 4.5)}</g>` +
  `<circle cx="581" cy="698.500" r="28" fill="#bdbdc7"/>` +
  `<g stroke="#fff" fill="#fff" stroke-width="1.300"><path d="M557 690l9-3 24-4M558 690l8 8M567 710l6 16M596 689l12-1" fill="none"/><path d="M608 690v8" stroke-width="2"/><circle cx="590" cy="676" r="5"/><circle cx="560" cy="689.500" r="2.600"/><circle cx="558" cy="709" r="2.400"/><path d="M584 675c5-2 13 1 14 4l-8 2z"/></g>` +
  `<circle cx="580.500" cy="698" r="19" fill="url(#selected-fill)"/>`;
```
